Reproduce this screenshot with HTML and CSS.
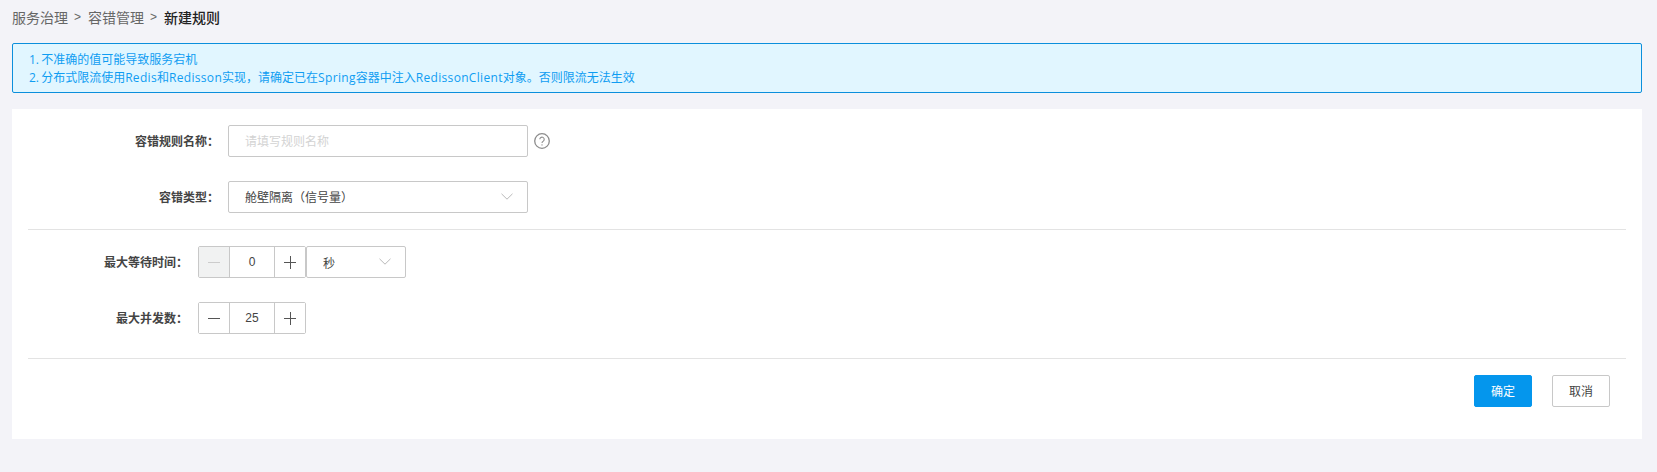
FILE: index.html
```html
<!DOCTYPE html>
<html lang="zh-CN">
<head>
<meta charset="utf-8">
<title>新建规则</title>
<link rel="stylesheet" href="styles.css">
</head>
<body>
<nav class="crumbs">
  <span class="crumb">服务治理</span><span class="sep">&gt;</span><span class="crumb">容错管理</span><span class="sep">&gt;</span><span class="crumb current">新建规则</span>
</nav>
<div class="alert">
  <p>1. 不准确的值可能导致服务宕机</p>
  <p>2. 分布式限流使用<span class="lat">Redis</span>和<span class="lat">Redisson</span>实现，请确定已在<span class="lat">Spring</span>容器中注入<span class="lat">RedissonClient</span>对象。否则限流无法生效</p>
</div>
<main class="card">
  <section class="group group-top">
    <div class="row">
      <label class="label label-wide">容错规则名称：</label>
      <div class="input placeholder">请填写规则名称</div>
      <svg class="help" viewBox="0 0 16 16" width="16" height="16" aria-hidden="true">
        <circle cx="8" cy="8" r="7.3" fill="none" stroke="#8c8c8c" stroke-width="1.3"/>
        <path d="M5.8 6.3a2.2 2.2 0 1 1 3.5 1.8c-.8.5-1.3 1-1.3 1.9" fill="none" stroke="#8c8c8c" stroke-width="1.1"/>
        <circle cx="8" cy="11.9" r=".7" fill="#8c8c8c"/>
      </svg>
    </div>
    <div class="row">
      <label class="label label-wide">容错类型：</label>
      <div class="select select-wide">
        <span>舱壁隔离（信号量）</span>
        <svg class="chev" viewBox="0 0 12 7" width="12" height="7" aria-hidden="true"><path d="M.5.8 6 6.2 11.5.8" fill="none" stroke="#b9b9b9"/></svg>
      </div>
    </div>
  </section>
  <section class="group group-mid">
    <div class="row">
      <label class="label label-narrow">最大等待时间：</label>
      <div class="stepper">
        <span class="step disabled"><i class="minus"></i></span>
        <span class="value">0</span>
        <span class="step"><i class="minus"></i><i class="bar"></i></span>
      </div>
      <div class="select select-unit">
        <span>秒</span>
        <svg class="chev" viewBox="0 0 12 7" width="12" height="7" aria-hidden="true"><path d="M.5.8 6 6.2 11.5.8" fill="none" stroke="#b9b9b9"/></svg>
      </div>
    </div>
    <div class="row">
      <label class="label label-narrow">最大并发数：</label>
      <div class="stepper">
        <span class="step"><i class="minus"></i></span>
        <span class="value">25</span>
        <span class="step"><i class="minus"></i><i class="bar"></i></span>
      </div>
    </div>
  </section>
  <footer class="actions">
    <button class="btn primary" type="button">确定</button>
    <button class="btn" type="button">取消</button>
  </footer>
</main>
</body>
</html>
```
FILE: styles.css
```css
* { box-sizing: border-box; }
html, body { margin: 0; }
body {
  width: 1657px;
  height: 472px;
  overflow: hidden;
  padding: 0 15px 0 12px;
  background: #f3f3f8;
  font-family: "Liberation Sans", "Noto Sans CJK SC", sans-serif;
  font-size: 12px;
  color: #444;
}
.crumbs {
  display: flex;
  align-items: center;
  height: 20px;
  margin-top: 7px;
  font-size: 14px;
  color: #666;
}
.sep { margin: 0 7px 0 6px; font-size: 12px; }
.current { color: #222; font-weight: 500; }
.alert {
  height: 50px;
  margin-top: 16px;
  padding: 7px 16px 0;
  background: #e1f6ff;
  border: 1px solid #0b8fdc;
  border-radius: 2px;
  color: #0f9df2;
  font-family: "Open Sans", "Noto Sans CJK SC", sans-serif;
  line-height: 18px;
  word-spacing: -1px;
}
.alert p { margin: 0; }
.lat { letter-spacing: .32px; }
.card {
  margin-top: 16px;
  height: 330px;
  padding: 0 16px;
  background: #fff;
}
.group { border-bottom: 1px solid #e3e3e3; }
.group-top { padding-top: 16px; height: 121px; }
.group-mid { padding-top: 16px; height: 129px; }
.row {
  display: flex;
  align-items: center;
  height: 32px;
  margin-bottom: 24px;
}
.label {
  padding-bottom: 2px;
  font-weight: 700;
  color: #444;
  text-align: right;
  white-space: nowrap;
}
.label-wide { width: 191px; margin-right: 9px; }
.label-narrow { width: 160px; margin-right: 10px; }
.input, .select {
  display: flex;
  align-items: center;
  height: 32px;
  background: #fff;
  border: 1px solid #c8c8c8;
  border-radius: 2px;
}
.input { width: 300px; padding: 0 0 2px 16px; }
.placeholder { color: #d3d3d3; }
.help { margin-left: 6px; }
.select { justify-content: space-between; padding: 0 14px 0 16px; }
.select-wide { width: 300px; padding-bottom: 2px; }
.select-unit { width: 100px; }
.select-unit .chev { margin-bottom: 2px; }
.stepper {
  display: flex;
  width: 108px;
  height: 32px;
  border: 1px solid #c8c8c8;
  border-radius: 2px;
}
.step {
  position: relative;
  flex: none;
  width: 30px;
  background: #fff;
}
.step.disabled { background: #f1f2f2; }
.step .minus {
  position: absolute;
  left: 9px;
  top: 15px;
  width: 12px;
  height: 1px;
  background: #555;
}
.step.disabled .minus { background: #ccc; }
.step .bar {
  position: absolute;
  left: 15px;
  top: 9px;
  width: 1px;
  height: 13px;
  background: #555;
}
.value {
  flex: 1;
  line-height: 30px;
  text-align: center;
  border-left: 1px solid #c8c8c8;
  border-right: 1px solid #c8c8c8;
}
.actions {
  display: flex;
  justify-content: flex-end;
  gap: 20px;
  padding: 16px 16px 0 0;
}
.btn {
  width: 58px;
  height: 32px;
  padding: 0 0 2px;
  font: inherit;
  color: #444;
  background: #fff;
  border: 1px solid #c8c8c8;
  border-radius: 2px;
}
.btn.primary { color: #fff; background: #0496ed; border-color: #0496ed; }
```
